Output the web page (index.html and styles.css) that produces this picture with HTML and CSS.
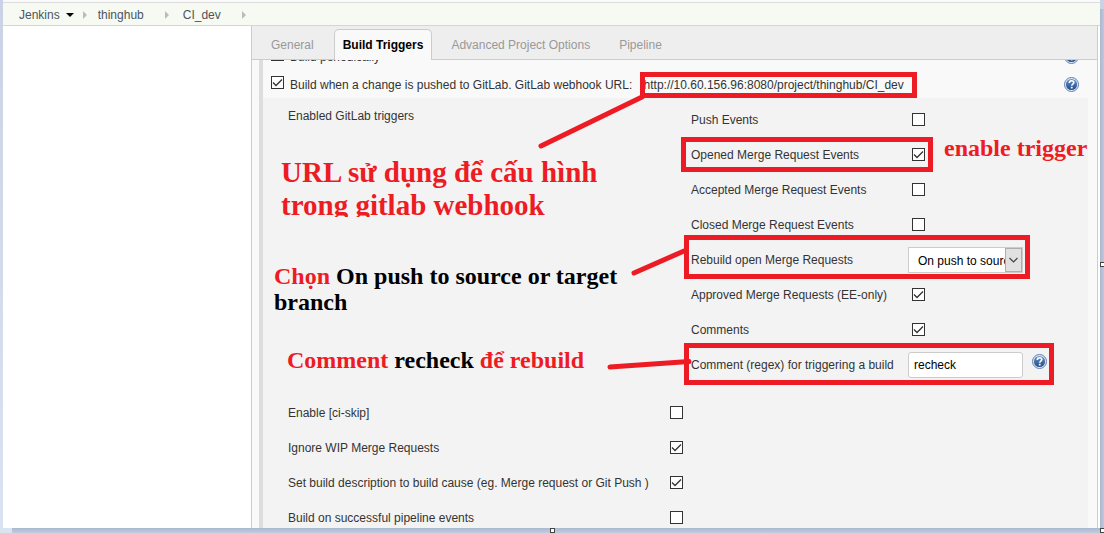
FILE: index.html
```html
<!DOCTYPE html>
<html lang="vi">
<head>
<meta charset="utf-8">
<title>CI_dev Config [Jenkins]</title>
<link rel="stylesheet" href="styles.css">
</head>
<body>
<svg class="defs" aria-hidden="true">
  <defs>
    <linearGradient id="help-fill" x1="0" y1="0" x2="0" y2="1">
      <stop offset="0" stop-color="#6f93c4"/>
      <stop offset="1" stop-color="#1d4a8c"/>
    </linearGradient>
    <symbol id="help" viewBox="0 0 15 15">
      <circle cx="7.5" cy="7.5" r="7" fill="#e4ebf4" stroke="#5f80b2"/>
      <circle cx="7.5" cy="7.5" r="5.6" fill="url(#help-fill)"/>
      <path d="M5.3 6C5.3 4.4 6.3 3.7 7.6 3.7 9 3.7 9.8 4.5 9.8 5.6 9.8 7 7.7 7.1 7.7 8.8" fill="none" stroke="#fff" stroke-width="1.6"/>
      <rect x="6.8" y="9.8" width="1.8" height="1.7" fill="#fff"/>
    </symbol>
  </defs>
</svg>
<div class="page">
  <div class="header-edge"></div>
  <nav class="breadcrumbs">
    <a href="#">Jenkins</a><span class="caret"></span><span class="chevron"></span>
    <a href="#">thinghub</a><span class="chevron wide"></span>
    <a href="#">CI_dev</a><span class="chevron wide"></span>
  </nav>
  <div class="main">
    <aside class="side"></aside>
    <main class="config">
      <div class="tabs">
        <button type="button" class="tab">General</button>
        <button type="button" class="tab active">Build Triggers</button>
        <button type="button" class="tab">Advanced Project Options</button>
        <button type="button" class="tab">Pipeline</button>
      </div>
      <div class="scroll">
        <form class="form">
          <div class="trigger">
            <input type="checkbox" id="periodic">
            <label for="periodic">Build periodically</label>
            <button type="button" class="help" aria-label="Help"><svg><use href="#help"/></svg></button>
          </div>
          <div class="trigger">
            <input type="checkbox" id="gitlab" checked>
            <label for="gitlab">Build when a change is pushed to GitLab. GitLab webhook URL: <span class="url">http://10.60.156.96:8080/project/thinghub/CI_dev</span></label>
            <button type="button" class="help" aria-label="Help"><svg><use href="#help"/></svg></button>
          </div>
          <div class="options">
            <div class="group">
              <div class="group-name">Enabled GitLab triggers</div>
              <div class="events">
                <div class="event"><label for="push">Push Events</label><input type="checkbox" id="push"></div>
                <div class="event"><label for="opened">Opened Merge Request Events</label><input type="checkbox" id="opened" checked></div>
                <div class="event"><label for="accepted">Accepted Merge Request Events</label><input type="checkbox" id="accepted"></div>
                <div class="event"><label for="closed">Closed Merge Request Events</label><input type="checkbox" id="closed"></div>
                <div class="event"><label for="rebuild">Rebuild open Merge Requests</label>
                  <select id="rebuild"><option>On push to source or target branch</option></select></div>
                <div class="event"><label for="approved">Approved Merge Requests (EE-only)</label><input type="checkbox" id="approved" checked></div>
                <div class="event"><label for="comments">Comments</label><input type="checkbox" id="comments" checked></div>
                <div class="event"><label for="regex">Comment (regex) for triggering a build</label>
                  <input type="text" id="regex" value="recheck">
                  <button type="button" class="help raised" aria-label="Help"><svg><use href="#help"/></svg></button></div>
              </div>
            </div>
            <div class="option"><label for="skip">Enable [ci-skip]</label><input type="checkbox" id="skip"></div>
            <div class="option"><label for="wip">Ignore WIP Merge Requests</label><input type="checkbox" id="wip" checked></div>
            <div class="option"><label for="desc">Set build description to build cause (eg. Merge request or Git Push )</label><input type="checkbox" id="desc" checked></div>
            <div class="option"><label for="pipe">Build on successful pipeline events</label><input type="checkbox" id="pipe"></div>
          </div>
        </form>
      </div>
    </main>
  </div>
</div>

<svg class="marks" viewBox="0 0 1104 533" aria-hidden="true">
  <g fill="none" stroke="#ed1c24" stroke-width="5">
    <rect x="642.5" y="74.5" width="272" height="21"/>
    <rect x="683.5" y="139.500" width="247" height="30"/>
    <rect x="686.5" y="237.5" width="341" height="39"/>
    <rect x="686.5" y="345.500" width="365" height="37"/>
    <g stroke-linecap="round" stroke-width="5">
      <path d="M541 146 642 97M634 273 684 251M610 367 689 361.500"/>
    </g>
  </g>
</svg>
<p class="note note-url">URL sử dụng để cấu hình<br>trong gitlab webhook</p>
<p class="note note-enable">enable trigger</p>
<p class="note note-select">Chọn <b>On push to source or target<br>branch</b></p>
<p class="note note-comment">Comment <b>recheck</b> để rebuild</p>
<span class="handle handle-bottom"></span>
<span class="handle handle-right"></span>
<span class="handle handle-corner"></span>
</body>
</html>
```
FILE: styles.css
```css
* { box-sizing: border-box; }

body {
  margin: 0;
  height: 100vh;
  overflow: hidden;
  position: relative;
  padding: 0 4px 5px 3px;
  background:
    linear-gradient(#dae3f1, #dae3f1) left bottom / 12px 5px no-repeat,
    linear-gradient(#c9d3e5, #d9e3f1) left top / 3px 100% no-repeat,
    linear-gradient(#c9d3e5, #c9d3e5) right top / 4px 9px no-repeat,
    linear-gradient(90deg, #aab7ce, #bcc9de) right top / 4px 100% no-repeat,
    linear-gradient(#aab7ce, #c0cde0) left bottom / 100% 5px no-repeat;
  font: 12px/14px "Liberation Sans", Arial, sans-serif;
  color: #333;
}

.defs { position: absolute; width: 0; height: 0; }

.page {
  height: 100%;
  display: flex;
  flex-direction: column;
  background: #fff;
}

.header-edge {
  height: 3px;
  flex: none;
  background: #fafafa;
  border-bottom: 1px solid #ddd;
}

.breadcrumbs {
  flex: none;
  display: flex;
  align-items: center;
  height: 23px;
  padding: 1px 0 0 16px;
  background: #f6faf2;
  border-bottom: 1px solid #d3d7cf;
}
.breadcrumbs a { color: #4d545d; text-decoration: none; }

.caret {
  margin-left: 6px;
  border: solid transparent;
  border-width: 4px 4px 0;
  border-top-color: #000;
}
.chevron {
  margin: 0 11px 0 9px;
  border: solid transparent;
  border-width: 4px 0 4px 4px;
  border-left-color: #bbb;
}
.chevron.wide { margin: 0 14px 0 21px; }

.main { flex: 1; min-height: 0; display: flex; padding-right: 2px; }
.side { flex: none; width: 248px; }

.config {
  flex: 1;
  min-width: 0;
  display: flex;
  flex-direction: column;
  background: #f9f9f9;
  border: solid #ccc;
  border-width: 0 1px;
}

.tabs {
  flex: none;
  display: flex;
  height: 34px;
  padding: 3px 0 0 9px;
  background: #eee;
  border-bottom: 1px solid #ccc;
}
.tab {
  height: 31px;
  padding: 0 9px;
  border: 1px solid transparent;
  border-bottom: 0;
  background: none;
  font: inherit;
  color: #999;
}
.tab + .tab { margin-left: 9px; }
.tab + .tab.active {
  margin-left: 10px;
  padding: 0 8px;
  background: #f9f9f9;
  border-color: #ccc;
  border-radius: 5px 5px 0 0;
  color: #000;
  font-weight: bold;
}

.scroll { flex: 1; min-height: 0; overflow: hidden; padding: 0 9px 0 7px; }
.form { margin: -18px 0 0; border-left: 4px solid #ddd; }

.trigger {
  display: flex;
  align-items: center;
  height: 28px;
  padding: 0 9px 0 8px;
}
.trigger label { flex: 1; margin-left: 6px; padding-top: 2px; }
.url { margin-left: 8px; }

input[type="checkbox"] {
  appearance: none;
  flex: none;
  width: 13px;
  height: 13px;
  margin: 0;
  border: 1px solid #333;
  background: #fff;
}
input[type="checkbox"]:checked {
  background: #fff url("data:image/svg+xml,%3Csvg xmlns='http://www.w3.org/2000/svg' viewBox='0 0 11 11'%3E%3Cpath d='M1 5.500 4 8.500 10 2.500' fill='none' stroke='%23333' stroke-width='1.300'/%3E%3C/svg%3E");
}
.trigger input[type="checkbox"] { margin-bottom: 3px; }

.help {
  flex: none;
  width: 15px;
  height: 15px;
  padding: 0;
  border: 0;
  background: none;
}
.help svg { display: block; width: 15px; height: 15px; }
.help.raised { margin: 0 0 7px 9px; }

.options { padding: 4px 0 0 25px; background: #f3f3f3; }
.group { display: flex; margin-bottom: 13px; }
.group-name { width: 403px; padding-top: 7px; }

.event, .option { display: flex; align-items: center; height: 35px; }
.event label { width: 217px; white-space: nowrap; }
.event input[type="checkbox"] { margin-left: 4px; }
.option label { width: 382px; }

select, input[type="text"] {
  width: 115px;
  height: 26px;
  border: 1px solid #ccc;
  background: #fff;
  color: #000;
  font: inherit;
}
input[type="text"] { padding: 1px 5px 0; border-radius: 3px; }
select {
  appearance: none;
  padding: 2px 17px 0 9px;
  border-radius: 0;
  background: #fff url("data:image/svg+xml,%3Csvg xmlns='http://www.w3.org/2000/svg' width='17' height='24'%3E%3Crect x='.5' y='.5' width='16' height='23' fill='%23e1e1e1' stroke='%23adadad'/%3E%3Cpath d='M4.500 10 8.500 14 12.500 10' fill='none' stroke='%23444' stroke-width='1.200'/%3E%3C/svg%3E") right center no-repeat;
}

/* Annotations drawn over the settings page */
.marks {
  position: absolute;
  left: 0;
  top: 0;
  width: 1104px;
  height: 533px;
  pointer-events: none;
}
.note {
  position: absolute;
  margin: 0;
  font: bold 24px/26px "Liberation Serif", "Times New Roman", serif;
  color: #ed1c24;
  white-space: nowrap;
}
.note b { color: #000; }
.note-url {
  left: 281px;
  top: 156px;
  height: 61px;
  overflow: hidden;
  font-size: 29px;
  line-height: 33px;
}
.note-enable { left: 944px; top: 135px; }
.note-select { left: 274px; top: 263px; }
.note-comment { left: 287px; top: 347px; }

.handle {
  position: absolute;
  width: 5px;
  height: 5px;
  border: 1px solid #444;
  background: #fff;
}
.handle-bottom { left: 550px; bottom: 0; }
.handle-right { right: -1px; top: 262px; }
.handle-corner { right: -1px; bottom: 0; }
```
